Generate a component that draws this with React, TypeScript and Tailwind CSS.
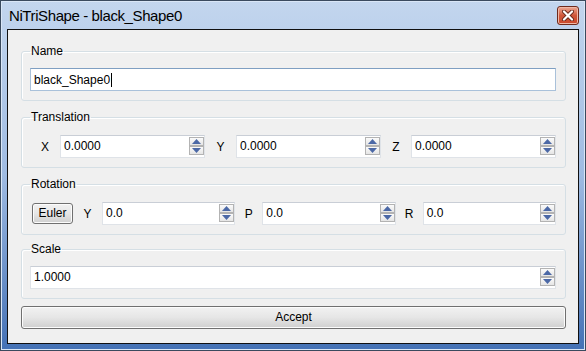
import React from 'react';

const font = { fontFamily: '"Liberation Sans", Arial, sans-serif' };

const SpinArrows: React.FC = () => (
  <div className="flex flex-col w-[15px] my-[1px] gap-0 shrink-0">
    {[true, false].map((up) => (
      <div
        key={up ? 'up' : 'down'}
        className="h-[9px] border border-[#b3b3b3] bg-gradient-to-b from-[#fbfbfb] to-[#e5e5e5] flex items-center justify-center"
      >
        <svg width="9" height="5" viewBox="0 0 9 5">
          {up ? (
            <polygon points="4.5,0 9,5 0,5" fill="#4b68a6" />
          ) : (
            <polygon points="0,0 9,0 4.5,5" fill="#4b68a6" />
          )}
        </svg>
      </div>
    ))}
  </div>
);

const SpinBox: React.FC<{ value: string; className?: string }> = ({ value, className = '' }) => (
  <div
    className={`h-[23px] flex items-stretch bg-white border border-[#dfe3e8] border-t-[#c9ced6] ${className}`}
  >
    <span className="flex-1 pl-[3px] text-[12px] leading-[21px] text-black">{value}</span>
    <SpinArrows />
  </div>
);

const Group: React.FC<{ title: string; className?: string; children: React.ReactNode }> = ({
  title,
  className = '',
  children,
}) => (
  <fieldset
    className={`shrink-0 border border-[#d5dfe5] rounded-[3px] pl-[8px] pr-[9px] pt-[10px] pb-[9px] shadow-[inset_1px_1px_0_#ffffff] ${className}`}
  >
    <legend className="px-[1px] text-[12px] leading-[14px] text-black">{title}</legend>
    {children}
  </fieldset>
);

const PushButton: React.FC<{ label: string; className?: string }> = ({ label, className = '' }) => (
  <button
    className={`h-[21px] rounded-[3px] border border-[#707070] bg-gradient-to-b from-[#f2f2f2] via-[#e6e6e6] to-[#cfcfcf] shadow-[inset_0_0_0_1px_#fcfcfc] text-[12px] text-black leading-[19px] ${className}`}
  >
    {label}
  </button>
);

export default function App() {
  return (
    <div
      style={font}
      className="w-[586px] h-[351px] border border-[#3a4a5e] bg-gradient-to-b from-[#c3d6ee] via-[#9fbbe2] to-[#4471b5] flex flex-col px-[6px] pb-[6px] shadow-[inset_0_0_0_1px_#d9e6f6]"
    >
      {/* Title bar */}
      <div className="h-[28px] shrink-0 flex items-start justify-between pl-[2px]">
        <span className="mt-[6px] text-[15px] leading-[17px] tracking-[-0.4px] text-black">
          NiTriShape - black_Shape0
        </span>
        <div className="mt-[5px] w-[22px] h-[19px] rounded-[3px] border border-[#6f2a1c] bg-gradient-to-b from-[#eba894] via-[#d0573a] to-[#c9482b] shadow-[inset_0_0_0_1px_#f0b8a6] flex items-center justify-center">
          <svg width="12" height="11" viewBox="0 0 12 11">
            <path
              d="M2 1.5 L10 9.5 M10 1.5 L2 9.5"
              stroke="#6b2a1c"
              strokeWidth="4"
              strokeLinecap="round"
            />
            <path
              d="M2 1.5 L10 9.5 M10 1.5 L2 9.5"
              stroke="#ffffff"
              strokeWidth="2.2"
              strokeLinecap="round"
            />
          </svg>
        </div>
      </div>

      {/* Client area */}
      <div className="flex-1 min-h-0 border border-[#101010] bg-[#f0f0f0] flex flex-col pl-[13px] pr-[12px] pt-[14px]">
        <Group title="Name">
          <div className="h-[23px] bg-white border border-[#a9c1da] border-t-[#7f9fc2] flex items-center pl-[3px] text-[12px] text-black">
            <span>black_Shape0</span>
            <span className="w-[1px] h-[14px] bg-black ml-[1px]" />
          </div>
        </Group>

        <Group title="Translation" className="mt-[9px]">
          <div className="flex items-center mt-[1px]">
            <span className="w-[30px] text-center text-[12px]">X</span>
            <SpinBox value="0.0000" className="flex-1" />
            <span className="w-[31px] text-center text-[12px]">Y</span>
            <SpinBox value="0.0000" className="flex-1" />
            <span className="w-[30px] text-center text-[12px]">Z</span>
            <SpinBox value="0.0000" className="flex-1" />
          </div>
        </Group>

        <Group title="Rotation" className="mt-[9px]">
          <div className="flex items-center mt-[1px]">
            <PushButton label="Euler" className="ml-[2px] w-[41px]" />
            <span className="w-[29px] text-center text-[12px]">Y</span>
            <SpinBox value="0.0" className="flex-1" />
            <span className="w-[27px] text-center text-[12px]">P</span>
            <SpinBox value="0.0" className="flex-1" />
            <span className="w-[27px] text-center text-[12px]">R</span>
            <SpinBox value="0.0" className="flex-1" />
          </div>
        </Group>

        <Group title="Scale" className="mt-[7px]">
          <SpinBox value="1.0000" />
        </Group>

        <PushButton label="Accept" className="shrink-0 h-[23px] leading-[21px] w-full mt-[7px]" />
      </div>
    </div>
  );
}
